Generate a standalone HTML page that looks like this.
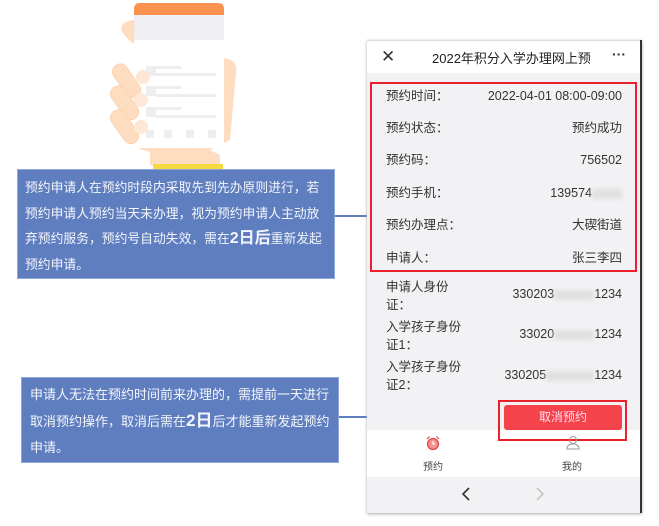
<!DOCTYPE html>
<html><head><meta charset="utf-8"><style>
*{margin:0;padding:0;box-sizing:border-box}
body{width:659px;height:526px;background:#fff;position:relative;overflow:hidden;font-family:"Liberation Sans","Noto Sans CJK SC",sans-serif}
.abs{position:absolute}
.blue{background:#5f7ec0;border:1px solid #8ea6d8;color:#f4f6fb;white-space:nowrap;overflow:hidden}
.row{position:absolute;left:386px;width:236px;font-size:12.5px;line-height:16px;height:16px;color:#333;display:flex;justify-content:space-between;align-items:center}
.lbl{position:absolute;left:386px;font-size:12.5px;color:#333;line-height:18px}
.val{position:absolute;right:37px;font-size:12.5px;color:#333}
.blur{display:inline-block;width:40px;height:10px;background:#e0e0e2;vertical-align:middle;filter:blur(2px)}
</style></head><body>
<svg class="abs" style="left:110px;top:0" width="140" height="175" viewBox="0 0 140 175">
<path d="M24 20 Q8 22 12 32 Q20 42 26 45Z" fill="#fddcc0"/>
<path d="M114 58 Q128 60 126 72 L120 140 Q110 145 100 150 L110 155 L110 165 L40 165 L40 152 Q20 148 30 140 L114 140Z" fill="#fddcc0"/>
<rect x="24" y="3" width="90" height="145" rx="6" fill="#fff"/>
<path d="M24 9 Q24 3 30 3 L108 3 Q114 3 114 9 L114 15 L24 15Z" fill="#fa9350"/>
<rect x="24" y="15" width="90" height="25" fill="#efeff1"/>
<g fill="#eee"><rect x="36" y="66" width="10" height="10"/><rect x="36" y="86" width="10" height="10"/><rect x="36" y="107" width="10" height="10"/>
<rect x="46" y="66" width="25" height="3"/><rect x="46" y="73" width="60" height="3"/><rect x="46" y="86" width="25" height="3"/><rect x="46" y="94" width="60" height="3"/><rect x="46" y="107" width="25" height="3"/><rect x="46" y="115" width="60" height="3"/>
<rect x="36" y="130" width="8" height="8"/><rect x="54" y="130" width="8" height="8"/><rect x="76" y="130" width="8" height="8"/><rect x="98" y="130" width="8" height="8"/></g>
<g fill="#fddcc0" stroke="#fcc9a0" stroke-width="0.5">
<rect x="8" y="62" width="16" height="38" rx="8" transform="rotate(-35 16 80)"/>
<rect x="6" y="84" width="16" height="38" rx="8" transform="rotate(-35 14 102)"/>
<rect x="6" y="108" width="16" height="38" rx="8" transform="rotate(-35 14 126)"/></g>
<g fill="#fee7d6"><circle cx="33" cy="77" r="7"/><circle cx="31" cy="100" r="7"/><circle cx="31" cy="127" r="7"/></g>
<rect x="43" y="164" width="70" height="5" fill="#f5d940"/>
</svg>
<div class="abs blue" style="left:17px;top:169px;width:318px;height:110px;padding:5px 0 0 7px;line-height:25.5px;font-size:12.8px">预约申请人在预约时段内采取先到先办原则进行，若<br>预约申请人预约当天未办理，视为预约申请人主动放<br>弃预约服务，预约号自动失效，需在<b style="font-size:16px">2日后</b>重新发起<br>预约申请。</div>
<div class="abs" style="left:335px;top:215px;width:33px;height:2px;background:#5f7ec0"></div>
<div class="abs blue" style="left:21px;top:377px;width:318px;height:86px;padding:4px 0 0 8px;line-height:26px;font-size:13px">申请人无法在预约时间前来办理的，需提前一天进行<br>取消预约操作，取消后需在<b style="font-size:17px">2日</b>后才能重新发起预约<br>申请。</div>
<div class="abs" style="left:339px;top:416px;width:165px;height:2px;background:#5f7ec0"></div>

<div class="abs" style="left:367px;top:40px;width:275px;height:473px;background:#f2f2f4;box-shadow:0 1px 3px #aaa;border-right:2px solid #333"></div>
<div class="abs" style="left:367px;top:40px;width:273px;height:33px;background:#fff;border-top:1px solid #ddd"></div>
<div class="abs" style="left:381px;top:47px;font-size:17px;color:#333">✕</div>
<div class="abs" style="left:432px;top:48px;font-size:13px;color:#222;width:158px;overflow:hidden;white-space:nowrap">2022年积分入学办理网上预</div>
<div class="abs" style="left:612px;top:46px;font-size:14px;color:#333;font-weight:bold">···</div>
<div class="abs" style="left:370px;top:82px;width:267px;height:190px;border:2px solid #e8212a"></div>
<div class="row" style="top:88px"><span>预约时间：</span><span>2022-04-01 08:00-09:00</span></div>
<div class="row" style="top:120px"><span>预约状态：</span><span>预约成功</span></div>
<div class="row" style="top:152px"><span>预约码：</span><span>756502</span></div>
<div class="row" style="top:185px"><span>预约手机：</span><span>139574<span class="blur" style="width:30px"></span></span></div>
<div class="row" style="top:217px"><span>预约办理点：</span><span>大碶街道</span></div>
<div class="row" style="top:250px"><span>申请人：</span><span>张三李四</span></div>
<div class="lbl" style="top:278px">申请人身份<br>证：</div><div class="val" style="top:287px">330203<span class="blur"></span>1234</div>
<div class="lbl" style="top:318px">入学孩子身份<br>证1：</div><div class="val" style="top:327px">33020<span class="blur"></span>1234</div>
<div class="lbl" style="top:358px">入学孩子身份<br>证2：</div><div class="val" style="top:368px">330205<span class="blur" style="width:48px"></span>1234</div>
<div class="abs" style="left:367px;top:430px;width:273px;height:47px;background:#fff"></div>
<div class="abs" style="left:504px;top:405px;width:118px;height:25px;background:#f4434b;border-radius:3px;color:#fde;font-size:12px;text-align:center;line-height:25px">取消预约</div>
<div class="abs" style="left:498px;top:400px;width:129px;height:41px;border:2px solid #e8212a"></div>
<svg class="abs" style="left:425px;top:435px" width="16" height="16" viewBox="0 0 16 16"><circle cx="8" cy="9" r="5.5" fill="#f39090" stroke="#d44" stroke-width="1.2"/><path d="M8 6v3h2" stroke="#fff" stroke-width="1.2" fill="none"/><path d="M2 4l2.5-2.5M14 4l-2.5-2.5" stroke="#d44" stroke-width="1.2"/></svg>
<div class="abs" style="left:423px;top:458px;font-size:10px;color:#444">预约</div>
<svg class="abs" style="left:566px;top:435px" width="14" height="15" viewBox="0 0 14 15"><circle cx="7" cy="5" r="3.5" fill="none" stroke="#999"/><path d="M1 14q0-5 6-5q6 0 6 5z" fill="none" stroke="#999"/></svg>
<div class="abs" style="left:562px;top:458px;font-size:10px;color:#444">我的</div>
<div class="abs" style="left:367px;top:477px;width:273px;height:35px;background:#f2f2f4"></div>
<svg class="abs" style="left:461px;top:487px" width="10" height="14"><path d="M8 1L2 7l6 6" stroke="#333" stroke-width="1.6" fill="none"/></svg>
<svg class="abs" style="left:535px;top:487px" width="10" height="14"><path d="M2 1l6 6-6 6" stroke="#bbb" stroke-width="1.3" fill="none"/></svg>
</body></html>
